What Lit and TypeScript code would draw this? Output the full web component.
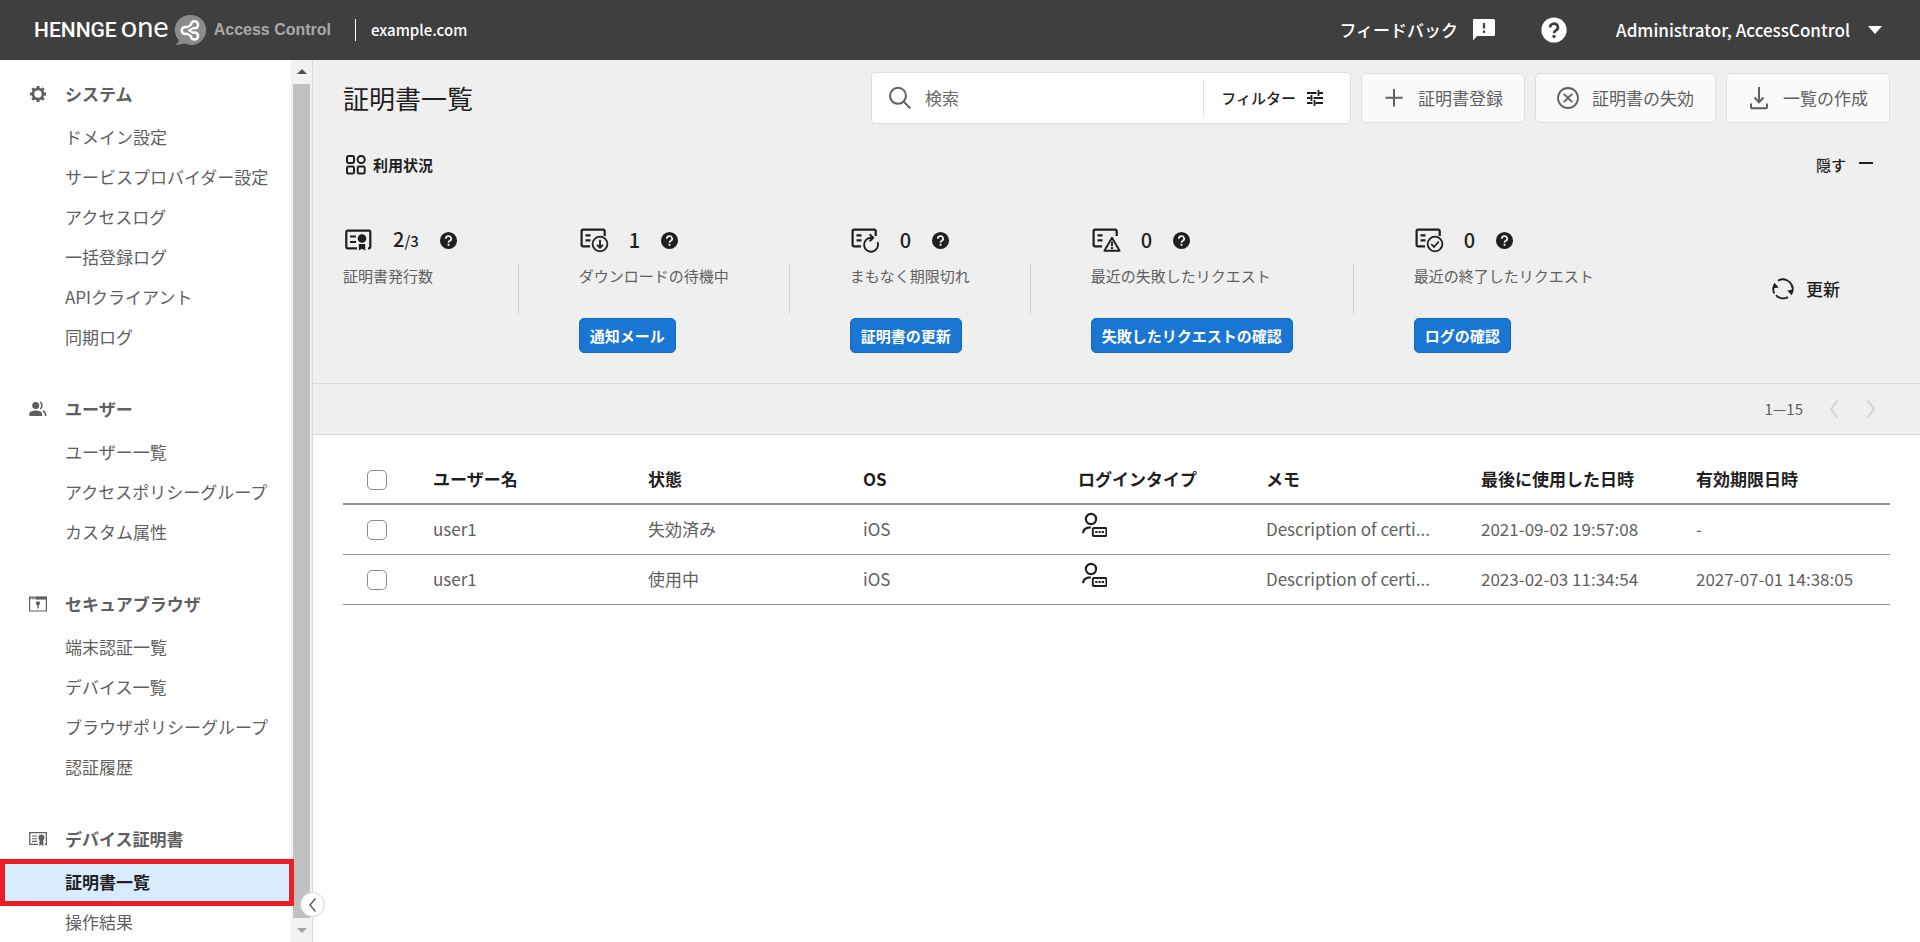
import { LitElement, html, svg, css, nothing, type TemplateResult, type SVGTemplateResult } from "lit";
import { customElement, state } from "lit/decorators.js";
import { classMap } from "lit/directives/class-map.js";

type Icon = TemplateResult;

const icon = (size: number, body: SVGTemplateResult, height = size): Icon =>
  html`<svg width=${size} height=${height} viewBox="0 0 ${size} ${height}" fill="none" stroke="currentColor" stroke-width="2" aria-hidden="true">${body}</svg>`;

const gearIcon = icon(18, svg`
  <circle cx="9" cy="9" r="5" stroke-width="2.6"/>
  <path d="M9 1v3M9 14v3M1 9h3M14 9h3M3.3 3.3l2 2M12.7 12.7l2 2M14.7 3.3l-2 2M5.3 12.7l-2 2" stroke-width="3"/>`);

const usersIcon = icon(18, svg`
  <g stroke="none" fill="currentColor">
    <circle cx="6.7" cy="5.6" r="3.5"/>
    <path d="M.3 16v-2.2c0-2.4 3.6-3.4 6.4-3.4s6.4 1 6.4 3.4V16z"/>
  </g>
  <path d="M11 2.3c2.6.8 2.6 5.6 0 6.5M14 11c1.6.7 2.7 2 2.8 5" stroke-width="1.5"/>`);

const browserIcon = icon(18, svg`
  <path d="M.6 2h16.8v14H.6z" stroke-width="1.2"/>
  <path d="M7 3.2h10.5" stroke-width="2.8"/>
  <path d="M1 3.2h6" stroke-width="2" stroke-dasharray="1.4 .8"/>
  <circle cx="9" cy="8.3" r="2.1" fill="currentColor" stroke="none"/>
  <path d="M9 8v5.4" stroke-width="1.4"/>`);

const certSmallIcon = icon(18, svg`
  <path d="M9 14.4H.8V2.6h16.6v11.8h-1.6" stroke-width="1.3"/>
  <path d="M3 6h5M3 8.7h5M3 11.4h5" stroke-width="1.1"/>
  <circle cx="12.4" cy="7.4" r="3" fill="currentColor" stroke="none"/>
  <path d="M10.4 9.6v6.6l2-1.6 2 1.6V9.6z" fill="currentColor" stroke="none"/>`);

const gridIcon = icon(20, svg`
  <rect x="1" y="1" width="7" height="7" rx="1.4"/>
  <circle cx="15.2" cy="4.5" r="3.6"/>
  <rect x="1" y="11.6" width="7" height="7" rx="1.4"/>
  <rect x="11.7" y="11.6" width="7" height="7" rx="1.4"/>`);

const docBase = svg`
  <path d="M11 21.4H4A1.4 1.4 0 0 1 2.6 20V6.1A1.4 1.4 0 0 1 4 4.7h20.3a1.4 1.4 0 0 1 1.4 1.4V11" stroke-width="2.2"/>
  <path d="M6.5 10.3h5M6.5 15.4h5" stroke-width="2.2"/>`;

const issuedIcon = icon(30, svg`
  <path d="M14 23.4H4.6a1.3 1.3 0 0 1-1.300-1.300V7a1.300 1.300 0 0 1 1.300-1.300H26A1.300 1.300 0 0 1 27.300 7v15.100a1.300 1.300 0 0 1-1.300 1.300h-1" stroke-width="2.200"/>
  <path d="M7 11.500h6M7 17h6" stroke-width="2.200"/>
  <circle cx="19" cy="13.500" r="4.300" fill="currentColor" stroke="none"/>
  <path d="M15.800 19h6.400v6.500L19 23.800l-3.200 1.700z" fill="currentColor" stroke="none"/>`);

const waitingIcon = icon(30, svg`${docBase}
  <circle cx="21" cy="19" r="7.400" stroke-width="1.800"/>
  <path d="M21 14.800v7.700M18 19.800l3 3 3-3" stroke-width="1.800"/>`);

const expiringIcon = icon(30, svg`${docBase}
  <path d="M27.600 17.200a7 7 0 1 1-6.600-4.500h2.400" stroke-width="1.900"/>
  <path d="M19.600 9.300l3.600 3.400-3.600 3.500" stroke-width="1.900"/>`);

const failedIcon = icon(30, svg`${docBase}
  <path d="M21 12.800l7.600 13H13.400z" stroke-width="1.900" stroke-linejoin="round"/>
  <path d="M21 16.400v4.600M21 22v2.200" stroke-width="1.900"/>`);

const doneIcon = icon(30, svg`${docBase}
  <circle cx="21" cy="19" r="7.400" stroke-width="1.800"/>
  <path d="M17.200 19l2.800 3 4.800-5.500" stroke-width="1.800"/>`);

const helpIcon = (size: number): Icon => html`
  <svg width=${size} height=${size} viewBox="0 0 20 20" aria-hidden="true">
    <circle cx="10" cy="10" r="9" fill="currentColor"/>
    <path class="knock" d="M7.200 8.200a2.800 2.600 0 1 1 4.200 2.100c-1 .6-1.400 1-1.400 2" fill="none" stroke-width="1.900"/>
    <circle class="dot" cx="10" cy="14.600" r="1.200"/>
  </svg>`;

const feedbackIcon = icon(24, svg`
  <path d="M2 1h19.500A1.500 1.500 0 0 1 23 2.500v14A1.500 1.500 0 0 1 21.500 18H5l-4 4.500V2A1 1 0 0 1 2 1z" fill="#fff" stroke="none"/>
  <path d="M12 5v5.500M12 12.500V15" stroke="#3f3f3f" stroke-width="2.200"/>`);

const searchIcon = icon(24, svg`<circle cx="10" cy="9.800" r="8"/><path d="M15.700 15.600l6.600 6.700"/>`);
const tuneIcon = icon(18, svg`
  <path d="M1 4h9.500M13 4H17M1 9h3.500M7.500 9H17M1 14h5.500M9.500 14H17" stroke-width="1.800"/>
  <path d="M12.500 1v6M5.500 6v6M8.500 11v6" stroke-width="1.800"/>`);
const plusIcon = icon(24, svg`<path d="M12 3v17.500M3.500 11.800h17"/>`);
const revokeIcon = icon(24, svg`<circle cx="12" cy="12" r="10" stroke-width="1.800"/><path d="M7.800 7.800l8.400 8.400M16.200 7.800l-8.400 8.400" stroke-width="1.800"/>`);
const exportIcon = icon(24, svg`<path d="M12 1v15M7.500 11.500l4.500 4.800 4.500-4.800"/><path d="M4 17.500v3.600a1.200 1.200 0 0 0 1.200 1.200h13.600a1.200 1.200 0 0 0 1.200-1.200v-3.600"/>`);
const refreshIcon = icon(24, svg`
  <path d="M3.300 16.500A9.500 9.500 0 0 1 4 7M7 3.700a9.500 9.500 0 0 1 14.300 6.800M20.700 7.700a9.500 9.500 0 0 1-.6 9.200M17 20.100a9.500 9.500 0 0 1-12-2" stroke-width="1.800"/>
  <path d="M1.200 11.500L3.400 5.800l4.300 4.700zM22.800 12.500l-2.200 5.700-4.300-4.700z" fill="currentColor" stroke="none"/>`);
const chevronLeft = icon(12, svg`<path d="M9.500 1.500L3 10l6.500 8.500"/>`, 20);
const chevronRight = icon(12, svg`<path d="M2.500 1.500L9 10l-6.500 8.500"/>`, 20);
const collapseIcon = icon(12, svg`<path d="M8.500 0.500L3 7l5.500 6.500" stroke-width="1.500"/>`, 14);

const passwordUserIcon = icon(26, svg`
  <circle cx="10" cy="7" r="5.100" stroke-width="2.200"/>
  <path d="M2 21.200c.3-4 3-5.900 7.800-5.900" stroke-width="2.200"/>
  <rect x="11.800" y="16" width="13.600" height="8" rx="1" stroke-width="1.900"/>
  <path d="M14.200 20h2.200M17.500 20h2.200M20.800 20h2.200" stroke-width="1.900"/>`);

const brandMark = html`
  <svg width="32" height="32" viewBox="0 0 32 32" aria-hidden="true">
    <path d="M17 1a15 15 0 1 1-6.200 28.600c-2.800 1-6.300 1.400-9.800.8 2.600-1 3.500-2.100 3.900-4.100A15 15 0 0 1 17 1z" fill="#8b8b8b"/>
    <path d="M20.500 11L11.500 16.500l9 5.500" stroke="#fff" stroke-width="6" stroke-linejoin="round" fill="none"/>
    <g fill="#fff">
      <circle cx="20.500" cy="10.800" r="4.800"/><circle cx="11.300" cy="16.500" r="4.800"/><circle cx="20.500" cy="22" r="4.800"/>
    </g>
    <path d="M20.500 11L11.500 16.500l9 5.500" stroke="#8b8b8b" stroke-width="1.800" fill="none"/>
    <g fill="#8b8b8b">
      <circle cx="20.500" cy="10.800" r="2.300"/><circle cx="11.300" cy="16.500" r="2.300"/><circle cx="20.500" cy="22" r="2.300"/>
    </g>
  </svg>`;

interface NavGroup { title: string; icon: Icon; items: string[] }

const NAV: NavGroup[] = [
  { title: "システム", icon: gearIcon, items: ["ドメイン設定", "サービスプロバイダー設定", "アクセスログ", "一括登録ログ", "APIクライアント", "同期ログ"] },
  { title: "ユーザー", icon: usersIcon, items: ["ユーザー一覧", "アクセスポリシーグループ", "カスタム属性"] },
  { title: "セキュアブラウザ", icon: browserIcon, items: ["端末認証一覧", "デバイス一覧", "ブラウザポリシーグループ", "認証履歴"] },
  { title: "デバイス証明書", icon: certSmallIcon, items: ["証明書一覧", "操作結果"] },
];
const CURRENT = "証明書一覧";

interface Stat { icon: Icon; value: string; total?: string; label: string; action?: string }

const STATS: Stat[] = [
  { icon: issuedIcon, value: "2", total: "/3", label: "証明書発行数" },
  { icon: waitingIcon, value: "1", label: "ダウンロードの待機中", action: "通知メール" },
  { icon: expiringIcon, value: "0", label: "まもなく期限切れ", action: "証明書の更新" },
  { icon: failedIcon, value: "0", label: "最近の失敗したリクエスト", action: "失敗したリクエストの確認" },
  { icon: doneIcon, value: "0", label: "最近の終了したリクエスト", action: "ログの確認" },
];

interface Cert { user: string; status: string; os: string; memo: string; lastUsed: string; expires: string }

const CERTS: Cert[] = [
  { user: "user1", status: "失効済み", os: "iOS", memo: "Description of certi...", lastUsed: "2021-09-02 19:57:08", expires: "-" },
  { user: "user1", status: "使用中", os: "iOS", memo: "Description of certi...", lastUsed: "2023-02-03 11:34:54", expires: "2027-07-01 14:38:05" },
];

@customElement("app-root")
export class AppRoot extends LitElement {
  @state() private selected = new Set<number>();

  static styles = css`
    :host {
      display: flex;
      flex-direction: column;
      min-height: 100vh;
      color: #1f1f1f;
      background: #fff;
      font: 400 17px/26px "Noto Sans CJK JP", "Noto Sans", sans-serif;
    }
    *, *::before, *::after { box-sizing: border-box; }
    a { color: inherit; text-decoration: none; }
    svg { display: block; flex: none; }
    button { font: inherit; color: inherit; background: none; border: 0; padding: 0; margin: 0; cursor: pointer; display: flex; align-items: center; }
    h1, h2, p, ul { margin: 0; padding: 0; }
    ul { list-style: none; }

    .topbar { height: 60px; background: #3f3f3f; color: #fff; display: flex; align-items: center; padding: 0 38px 0 34px; font-weight: 500; }
    .brand { display: flex; align-items: center; }
    .brand-name { display: flex; align-items: baseline; gap: 4px; padding-bottom: 4px; font: 500 21px/28px Roboto, sans-serif; }
    .brand-one { font: 400 29px/28px Lato, sans-serif; }
    .brand-mark { margin: 0 8px 0 5px; }
    .product { font: 700 16px/20px "Liberation Sans", Arial, sans-serif; color: #a9a9a9; }
    .domain { margin-left: 24px; padding-left: 15px; border-left: 1px solid #fff; line-height: 22px; font-size: 15px; }
    .top-actions { margin-left: auto; display: flex; align-items: center; }
    .feedback { gap: 14px; font-weight: 500; }
    .top-help { margin: 0 48px 0 44px; --knock: #3f3f3f; }
    .account { gap: 18px; font-weight: 500; }
    .caret { width: 0; height: 0; border: 7px solid transparent; border-top: 8px solid #fff; border-bottom: 0; }
    .knock { stroke: var(--knock); }
    .dot { fill: var(--knock); }

    .body { flex: 1; display: flex; }
    .side { flex: none; width: 313px; display: flex; position: relative; border-right: 1px solid #d8d8d8; color: #5f5f5f; }
    .nav { flex: 1; padding-top: 11px; display: flex; flex-direction: column; gap: 29px; }
    .group-title { height: 46px; display: flex; align-items: center; gap: 18px; padding-left: 29px; font: 700 17px/26px "Noto Sans CJK JP", sans-serif; }
    .link { display: flex; align-items: center; height: 40px; padding-left: 65px; }
    .current { position: relative; background: #d9ecfd; color: #1f1f1f; font-weight: 700; }
    .current::after { content: ""; position: absolute; z-index: 1; inset: -3px -3px -4px 0; border: 5px solid #ee1c24; }
    .scroll { width: 21px; background: #f1f1f1; display: flex; flex-direction: column; align-items: center; gap: 10px; padding: 9px 2px 9px; }
    .arrow { width: 0; height: 0; border: 5px solid transparent; }
    .up { border-bottom-color: #505050; border-top: 0; }
    .down { border-top-color: #a3a3a3; border-bottom: 0; }
    .thumb { flex: 1; align-self: stretch; background: #c1c1c1; }
    .collapse { position: absolute; right: -13px; bottom: 25px; width: 25px; height: 25px; border-radius: 50%; border: 1px solid #d5d5d5; background: #fff; justify-content: center; }

    .main { flex: 1; min-width: 0; }
    .panel { background: #efefef; padding: 12px 30px 30px; border-bottom: 1px solid #d8d8d8; }
    .toolbar { display: flex; align-items: center; gap: 10px; }
    .title { flex: 1; font-size: 26px; line-height: 40px; font-weight: 400; }
    .search { width: 480px; height: 52px; display: flex; align-items: center; background: #fff; border: 1px solid #dedede; border-radius: 4px; color: #5f5f5f; padding-left: 16px; }
    .search-input { flex: 1; min-width: 0; margin-left: 13px; padding: 0; border: 0; outline: 0; background: none; font: inherit; color: #1f1f1f; }
    .search-input::placeholder { color: #6a6a6a; opacity: 1; }
    .filter { height: 36px; border-left: 1px solid #dedede; padding: 0 26px 0 17px; gap: 10px; font-size: 15px; font-weight: 500; color: #1f1f1f; }
    .tool { height: 50px; padding: 0 21px 0 20px; gap: 12px; background: #fafafa; border: 1px solid #dedede; border-radius: 5px; color: #5f5f5f; white-space: nowrap; }

    .usage-head { display: flex; align-items: center; justify-content: space-between; margin-top: 28px; padding-left: 3px; font-size: 15px; }
    .usage-title { display: flex; align-items: center; gap: 7px; font-size: 15px; line-height: 26px; font-weight: 700; }
    .hide { gap: 13px; padding-right: 17px; font-weight: 500; }
    .minus { width: 14px; height: 2px; margin-bottom: 5px; background: #1f1f1f; }

    .stats { display: flex; align-items: center; margin-top: 47px; }
    .stat { height: 128px; display: flex; flex-direction: column; align-items: flex-start; }
    .split { width: 1px; height: 50px; margin: 0 60px; background: #d3d3d3; }
    .stat-top { height: 30px; display: flex; align-items: center; gap: 20px; font-size: 20px; font-weight: 500; --knock: #efefef; }
    .total { font-size: 15px; }
    .stat-label { margin-top: 10px; font-size: 15px; line-height: 22px; color: #5f5f5f; white-space: nowrap; }
    .action { height: 35px; margin-top: auto; padding: 0 10px; background: #1976d2; border: 1px solid #1767b8; border-radius: 5px; color: #fff; font-size: 15px; font-weight: 700; white-space: nowrap; }
    .refresh { margin-left: auto; padding-right: 50px; gap: 11px; font-weight: 500; }

    .pager { height: 51px; background: #efefef; border-bottom: 1px solid #d8d8d8; display: flex; align-items: center; justify-content: flex-end; padding-right: 43px; font-size: 15px; color: #5f5f5f; }
    .page { color: #d3d3d3; width: 12px; margin-left: 25px; }

    .content { padding: 19px 30px; }
    .certs { width: 100%; table-layout: fixed; border-collapse: collapse; text-align: left; color: #5f5f5f; }
    .certs th { height: 50px; padding: 0; border-bottom: 2px solid #929292; color: #1f1f1f; font-weight: 700; white-space: nowrap; }
    .certs td { height: 50px; padding: 0; border-bottom: 1px solid #929292; white-space: nowrap; }
    .c-check { width: 90px; }
    .c-login { width: 215px; }
    .c-memo { width: 215px; }
    .c-last { width: 194px; }
    .login-mark { display: flex; height: 34px; padding-left: 3px; }
    .login-mark { color: #1f1f1f; }
    .check { display: block; appearance: none; width: 20px; height: 20px; margin: 2px 0 0 24px; border: 1px solid #8c8c8c; border-radius: 5px; background: #fff; }
    .check:checked { background: #1976d2; border-color: #1976d2; }
    .c-type { width: 188px; }
  `;

  private toggle(i: number) {
    const next = new Set(this.selected);
    next.has(i) ? next.delete(i) : next.add(i);
    this.selected = next;
  }

  private toggleAll() {
    this.selected = this.selected.size === CERTS.length ? new Set() : new Set(CERTS.map((_, i) => i));
  }

  private renderTopbar() {
    return html`
      <header class="topbar">
        <div class="brand">
          <span class="brand-name"><span>HENNGE</span><span class="brand-one">one</span></span>
          <span class="brand-mark">${brandMark}</span>
          <span class="product">Access Control</span>
        </div>
        <span class="domain">example.com</span>
        <div class="top-actions">
          <button class="feedback">フィードバック ${feedbackIcon}</button>
          <button class="top-help" aria-label="ヘルプ">${helpIcon(28)}</button>
          <button class="account">Administrator, AccessControl <span class="caret"></span></button>
        </div>
      </header>`;
  }

  private renderSide() {
    return html`
      <aside class="side">
        <nav class="nav">
          ${NAV.map((g) => html`
            <section>
              <h2 class="group-title">${g.icon}${g.title}</h2>
              <ul>
                ${g.items.map((t) => html`<li><a href="#" class=${classMap({ link: true, current: t === CURRENT })}>${t}</a></li>`)}
              </ul>
            </section>`)}
        </nav>
        <div class="scroll" aria-hidden="true">
          <span class="arrow up"></span><span class="thumb"></span><span class="arrow down"></span>
        </div>
        <button class="collapse" aria-label="メニューを閉じる">${collapseIcon}</button>
      </aside>`;
  }

  private renderStat(s: Stat, i: number) {
    return html`
      ${i ? html`<span class="split"></span>` : nothing}
      <div class="stat">
        <div class="stat-top">${s.icon}<span>${s.value}${s.total ? html`<span class="total">${s.total}</span>` : nothing}</span>${helpIcon(19)}</div>
        <p class="stat-label">${s.label}</p>
        ${s.action ? html`<button class="action">${s.action}</button>` : nothing}
      </div>`;
  }

  private renderTable() {
    return html`
      <table class="certs">
        <colgroup>
          <col class="c-check"><col><col><col><col class="c-type"><col><col><col class="c-last">
        </colgroup>
        <thead>
          <tr>
            <th><input class="check" type="checkbox" aria-label="すべて選択" .checked=${this.selected.size === CERTS.length} @change=${this.toggleAll}></th>
            ${["ユーザー名", "状態", "OS", "ログインタイプ", "メモ", "最後に使用した日時", "有効期限日時"].map((h) => html`<th scope="col">${h}</th>`)}
          </tr>
        </thead>
        <tbody>
          ${CERTS.map((c, i) => html`
            <tr>
              <td><input class="check" type="checkbox" aria-label="選択" .checked=${this.selected.has(i)} @change=${() => this.toggle(i)}></td>
              <td>${c.user}</td>
              <td>${c.status}</td>
              <td>${c.os}</td>
              <td><span class="login-mark">${passwordUserIcon}</span></td>
              <td>${c.memo}</td>
              <td>${c.lastUsed}</td>
              <td>${c.expires}</td>
            </tr>`)}
        </tbody>
      </table>`;
  }

  render() {
    return html`
      ${this.renderTopbar()}
      <div class="body">
        ${this.renderSide()}
        <main class="main">
          <section class="panel">
            <div class="toolbar">
              <h1 class="title">証明書一覧</h1>
              <div class="search">
                ${searchIcon}
                <input class="search-input" type="text" placeholder="検索" aria-label="検索">
                <button class="filter">フィルター ${tuneIcon}</button>
              </div>
              <button class="tool">${plusIcon}証明書登録</button>
              <button class="tool">${revokeIcon}証明書の失効</button>
              <button class="tool">${exportIcon}一覧の作成</button>
            </div>
            <div class="usage-head">
              <h2 class="usage-title">${gridIcon}利用状況</h2>
              <button class="hide">隠す <span class="minus"></span></button>
            </div>
            <div class="stats">
              ${STATS.map((s, i) => this.renderStat(s, i))}
              <button class="refresh">${refreshIcon}更新</button>
            </div>
          </section>
          <div class="pager">
            <span>1—15</span>
            <button class="page" aria-label="前へ" disabled>${chevronLeft}</button>
            <button class="page" aria-label="次へ" disabled>${chevronRight}</button>
          </div>
          <div class="content">${this.renderTable()}</div>
        </main>
      </div>`;
  }
}
